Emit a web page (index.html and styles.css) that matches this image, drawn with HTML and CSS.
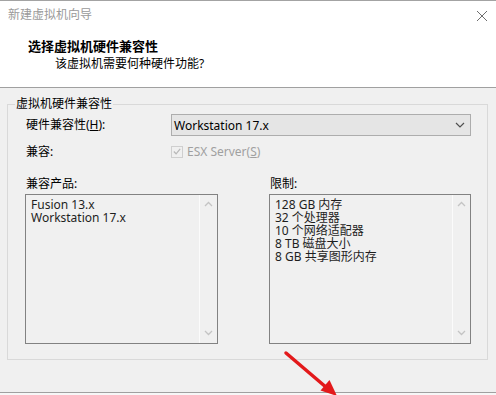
FILE: index.html
```html
<!DOCTYPE html>
<html lang="zh-CN">
<head>
<meta charset="utf-8">
<title>新建虚拟机向导</title>
<link rel="stylesheet" href="styles.css">
</head>
<body>
<div class="window">
  <header class="header">
    <div class="titlebar">
      <span class="title">新建虚拟机向导</span>
      <svg class="close" width="12" height="12" viewBox="0 0 12 12"><path d="M1 1L11 11M11 1L1 11" stroke="#6e6e6e" stroke-width="1" fill="none"/></svg>
    </div>
    <h1 class="heading">选择虚拟机硬件兼容性</h1>
    <p class="subtitle">该虚拟机需要何种硬件功能?</p>
  </header>
  <main class="content">
    <fieldset class="group">
      <legend class="legend">虚拟机硬件兼容性</legend>
      <div class="form-row">
        <span class="label">硬件兼容性(<u>H</u>):</span>
        <div class="select">
          <span>Workstation 17.x</span>
          <svg width="10" height="6" viewBox="0 0 10 6"><path d="M1 1L5 5L9 1" stroke="#505050" stroke-width="1.2" fill="none"/></svg>
        </div>
      </div>
      <div class="form-row row-compat">
        <span class="label">兼容:</span>
        <label class="check">
          <span class="box"><svg width="11" height="11" viewBox="0 0 11 11"><path d="M2 5.5L4.5 8L9 2.5" stroke="#b8b8b8" stroke-width="1.3" fill="none"/></svg></span>
          <span>ESX Server(<u>S</u>)</span>
        </label>
      </div>
      <div class="lists">
        <div class="col">
          <span class="label">兼容产品:</span>
          <div class="listbox left">
            <ul class="items">
              <li>Fusion 13.x</li>
              <li>Workstation 17.x</li>
            </ul>
            <div class="scroll">
              <svg width="9" height="6" viewBox="0 0 9 6"><path d="M1 5L4.5 1.5L8 5" stroke="#c4c4c4" stroke-width="1.3" fill="none"/></svg>
              <svg width="9" height="6" viewBox="0 0 9 6"><path d="M1 1L4.5 4.5L8 1" stroke="#c4c4c4" stroke-width="1.3" fill="none"/></svg>
            </div>
          </div>
        </div>
        <div class="col">
          <span class="label">限制:</span>
          <div class="listbox right">
            <ul class="items">
              <li>128 GB 内存</li>
              <li>32 个处理器</li>
              <li>10 个网络适配器</li>
              <li>8 TB 磁盘大小</li>
              <li>8 GB 共享图形内存</li>
            </ul>
            <div class="scroll">
              <svg width="9" height="6" viewBox="0 0 9 6"><path d="M1 5L4.5 1.5L8 5" stroke="#c4c4c4" stroke-width="1.3" fill="none"/></svg>
              <svg width="9" height="6" viewBox="0 0 9 6"><path d="M1 1L4.5 4.5L8 1" stroke="#c4c4c4" stroke-width="1.3" fill="none"/></svg>
            </div>
          </div>
        </div>
      </div>
    </fieldset>
  </main>
  <footer class="footer"></footer>
  <svg class="arrow" width="70" height="50" viewBox="280 345 70 50">
    <line x1="286" y1="353" x2="327" y2="388" stroke="#e3191b" stroke-width="3.5" stroke-linecap="round"/>
    <polygon points="337,396 320.5,390.5 329.5,380" fill="#e3191b"/>
  </svg>
</div>
</body>
</html>
```

FILE: styles.css
```css
* { box-sizing: border-box; }
html, body { margin: 0; padding: 0; }
body {
  width: 496px;
  height: 395px;
  overflow: hidden;
  background: #f0f0f0;
  font-family: "Noto Sans", "Noto Sans CJK SC", sans-serif;
  font-size: 12px;
  color: #1e1e1e;
}
.window {
  position: relative;
  width: 496px;
  height: 395px;
  display: flex;
  flex-direction: column;
  border-top: 1px solid #a3a3a3;
}
.header {
  background: #fff;
  border-bottom: 1px solid #a0a0a0;
  height: 87px;
}
.titlebar {
  height: 28px;
  display: flex;
  align-items: center;
  justify-content: space-between;
  padding: 0 8px 0 8px;
}
.title {
  color: #9a9a9a;
  line-height: 28px;
}
.close { margin-top: 1px; }
.heading {
  margin: 9px 0 0 28px;
  font-size: 13px;
  font-weight: bold;
  line-height: 16px;
  color: #000;
}
.subtitle {
  margin: 2px 0 0 55px;
  line-height: 16px;
  color: #000;
}
.content {
  flex: 1;
  padding: 9px 8px 0 7px;
}
.group {
  margin: 0;
  width: 481px;
  height: 263px;
  border: 1px solid #d9d9d9;
  padding: 3px 0 0 17px;
}
.legend {
  padding: 0 1px;
  margin-left: -10px;
  line-height: 14px;
  color: #000;
}
.label { color: #000; padding-left: 1px; line-height: 16px; }
.form-row {
  display: grid;
  grid-template-columns: 146px 300px;
  align-items: center;
}
.select {
  height: 22px;
  background: #e5e5e5;
  border: 1px solid #adadad;
  display: flex;
  align-items: center;
  justify-content: space-between;
  padding: 0 5px 0 2px;
  color: #000;
}
.row-compat { margin-top: 7px; }
.check {
  display: flex;
  align-items: center;
  gap: 4px;
  color: #a0a0a0;
}
.box {
  width: 12px;
  height: 12px;
  border: 1px solid #cfcfcf;
  display: flex;
  align-items: center;
  justify-content: center;
}
.lists {
  display: grid;
  grid-template-columns: 193px 202px;
  column-gap: 51px;
  margin-top: 16px;
}
.col { display: flex; flex-direction: column; }
.listbox {
  margin-top: 2px;
  height: 150px;
  border: 1px solid #828282;
  display: flex;
}
.items {
  list-style: none;
  margin: 0;
  padding: 3px 5px;
  flex: 1;
  line-height: 13px;
  color: #1e1e1e;
}
.scroll {
  width: 18px;
  border-left: 1px solid #fbfbfb;
  display: flex;
  flex-direction: column;
  justify-content: space-between;
  align-items: center;
  padding: 6px 0 7px;
}
.footer {
  height: 3px;
  border-top: 1px solid #a0a0a0;
  background: #f7f7f7;
}
.arrow {
  position: absolute;
  left: 280px;
  top: 344px;
}
```
